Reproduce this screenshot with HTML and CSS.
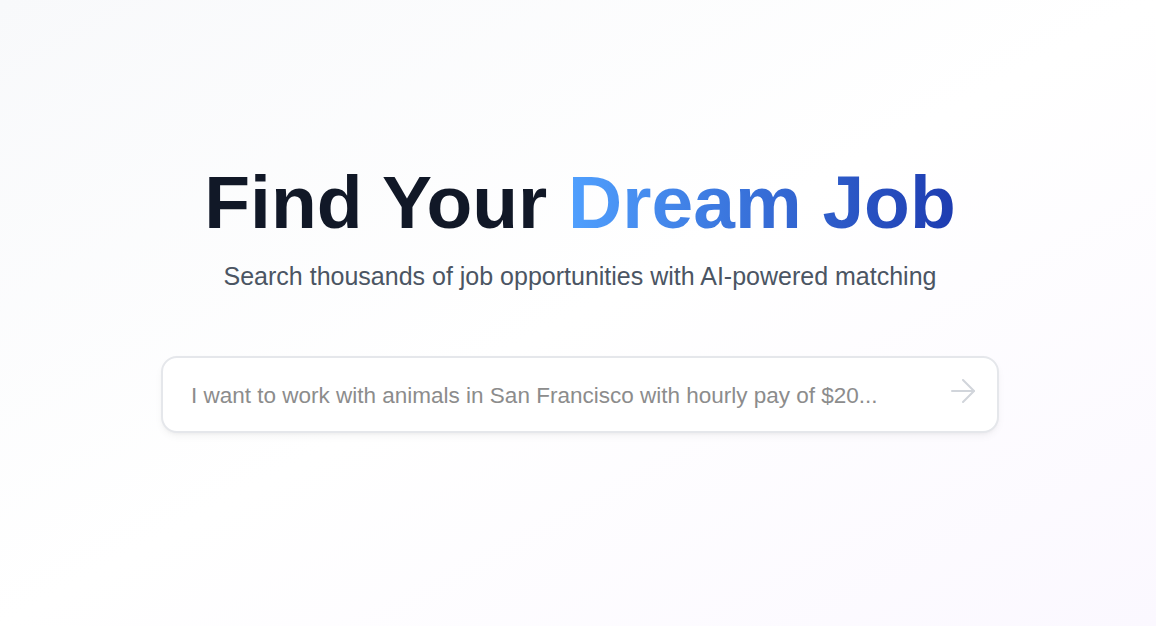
FILE: index.html
```html
<!DOCTYPE html>
<html lang="en">
<head>
<meta charset="utf-8">
<title>Find Your Dream Job</title>
<link rel="stylesheet" href="styles.css">
</head>
<body>
<main class="page">
  <section class="hero">
    <h1 class="title">Find Your <span class="accent">Dream Job</span></h1>
    <p class="subtitle">Search thousands of job opportunities with AI-powered matching</p>
    <form class="search" onsubmit="return false">
      <input class="search-input" type="text" placeholder="I want to work with animals in San Francisco with hourly pay of $20...">
      <button class="search-btn" type="submit" aria-label="Search">
        <svg width="24" height="24" viewBox="0 0 24 24" fill="none" stroke="currentColor" stroke-width="2" stroke-linecap="round" stroke-linejoin="round"><path d="M1 12h22"/><path d="M12 1l11 11-11 11"/></svg>
      </button>
    </form>
  </section>
</main>
</body>
</html>
```
FILE: styles.css
```css
* { box-sizing: border-box; }
html, body { margin: 0; padding: 0; height: 100%; }
body {
  font-family: "Liberation Sans", Arial, sans-serif;
  background: linear-gradient(to bottom right, #f8f9fb 0%, #ffffff 50%, #fbf8ff 100%);
  min-height: 626px;
}
.page {
  display: flex;
  justify-content: center;
  padding: 165px 12px 0 16px;
}
.hero {
  display: flex;
  flex-direction: column;
  align-items: center;
  width: 838px;
}
.title {
  margin: 0;
  font-size: 75px;
  line-height: 75px;
  font-weight: 700;
  color: #111827;
  white-space: nowrap;
}
.accent {
  background: linear-gradient(to right, #50a0fe, #1d3bb0);
  -webkit-background-clip: text;
  background-clip: text;
  color: transparent;
}
.subtitle {
  margin: 20px 0 0;
  font-size: 25px;
  line-height: 32px;
  color: #4b5563;
  white-space: nowrap;
}
.search {
  margin-top: 64px;
  width: 838px;
  height: 77px;
  display: flex;
  align-items: center;
  background: #ffffff;
  border: 2px solid #e5e7eb;
  border-radius: 16px;
  box-shadow: 0 4px 10px -2px rgba(0,0,0,0.06), 0 2px 4px -2px rgba(0,0,0,0.05);
  padding: 0 22px 0 28px;
}
.search-input {
  flex: 1;
  border: none;
  outline: none;
  background: transparent;
  font-family: "Liberation Sans", Arial, sans-serif;
  font-size: 22.5px;
  color: #111827;
  padding: 0;
  margin-top: 2px;
}
.search-input::placeholder { color: #8c8c8c; }
.search-btn {
  border: none;
  background: transparent;
  padding: 0;
  color: #d1d5db;
  display: flex;
  margin-bottom: 7px;
  cursor: pointer;
}
```
